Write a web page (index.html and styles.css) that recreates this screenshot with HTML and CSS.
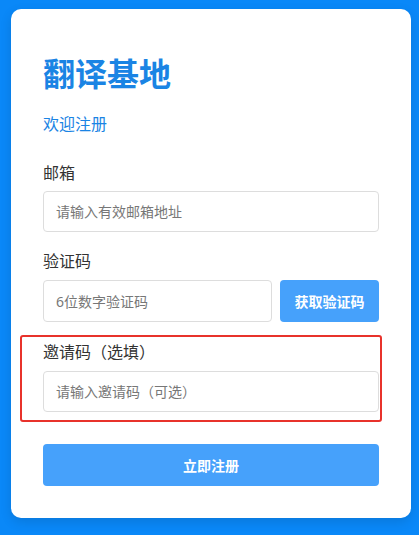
FILE: index.html
```html
<!DOCTYPE html>
<html lang="zh-CN">
<head>
    <meta charset="UTF-8">
    <meta name="viewport" content="width=device-width, initial-scale=1.0">
    <title>翻译基地 - 注册</title>
    <link rel="stylesheet" href="styles.css">
</head>
<body>
    <div class="card">
        <h1 class="brand">翻译基地</h1>
        <p class="subtitle">欢迎注册</p>

        <form class="register-form">
            <div class="form-group">
                <label for="email">邮箱</label>
                <input type="email" id="email" class="text-input" placeholder="请输入有效邮箱地址">
            </div>

            <div class="form-group code-group">
                <label for="code">验证码</label>
                <div class="code-row">
                    <input type="text" id="code" class="text-input" placeholder="6位数字验证码">
                    <button type="button" class="code-button">获取验证码</button>
                </div>
            </div>

            <div class="form-group invite-group">
                <label for="invite">邀请码（选填）</label>
                <input type="text" id="invite" class="text-input" placeholder="请输入邀请码（可选）">
            </div>

            <button type="submit" class="submit-button">立即注册</button>
        </form>
    </div>
</body>
</html>
```

FILE: styles.css
```css
:root {
    --page-bg: #0a88f8;
    --card-bg: #ffffff;
    --brand-color: #1a84e4;
    --text-color: #333333;
    --placeholder: #777777;
    --border-color: #dddddd;
    --button-bg: #46a1fb;
    --highlight: #e8322b;
}

* {
    box-sizing: border-box;
    margin: 0;
    padding: 0;
}

body {
    font-family: "Noto Sans", "Noto Sans CJK SC", sans-serif;
    background-color: var(--page-bg);
    color: var(--text-color);
    padding: 9px 8px 0 11px;
    min-height: 100vh;
}

.card {
    width: 400px;
    background-color: var(--card-bg);
    border-radius: 10px;
    padding: 41px 32px 32px;
    box-shadow: 0 4px 12px rgba(0, 0, 0, 0.12);
}

.brand {
    font-size: 32px;
    line-height: 48px;
    font-weight: 700;
    color: var(--brand-color);
}

.subtitle {
    margin-top: 14px;
    font-size: 16px;
    line-height: 24px;
    color: var(--brand-color);
}

.register-form {
    display: flex;
    flex-direction: column;
}

.form-group {
    margin-top: 25px;
}

.form-group label {
    display: block;
    font-size: 16px;
    line-height: 24px;
    margin-bottom: 6px;
}

.code-group {
    margin-top: 17px;
}

.code-group label,
.invite-group label {
    margin-bottom: 7px;
}

.text-input {
    display: block;
    width: 100%;
    height: 41px;
    padding: 0 12px;
    border: 1px solid var(--border-color);
    border-radius: 4px;
    font-family: inherit;
    font-size: 14px;
    color: var(--text-color);
    outline: none;
}

.text-input::placeholder {
    color: var(--placeholder);
}

.code-row {
    display: flex;
    gap: 8px;
    height: 42px;
}

.code-row .text-input {
    flex: 1;
    height: 100%;
}

.code-button {
    width: 99px;
    border: none;
    border-radius: 4px;
    background-color: var(--button-bg);
    color: #ffffff;
    font-family: inherit;
    font-size: 14px;
    font-weight: 700;
    cursor: pointer;
}

/* 邀请码区域的红色提示框 */
.invite-group {
    margin: 13px -3px 0 -23px;
    padding: 3px 1px 8px 21px;
    border: 2px solid var(--highlight);
    border-radius: 3px;
}

.submit-button {
    margin-top: 22px;
    height: 42px;
    border: none;
    border-radius: 4px;
    background-color: var(--button-bg);
    color: #ffffff;
    font-family: inherit;
    font-size: 14px;
    font-weight: 700;
    cursor: pointer;
}
```
